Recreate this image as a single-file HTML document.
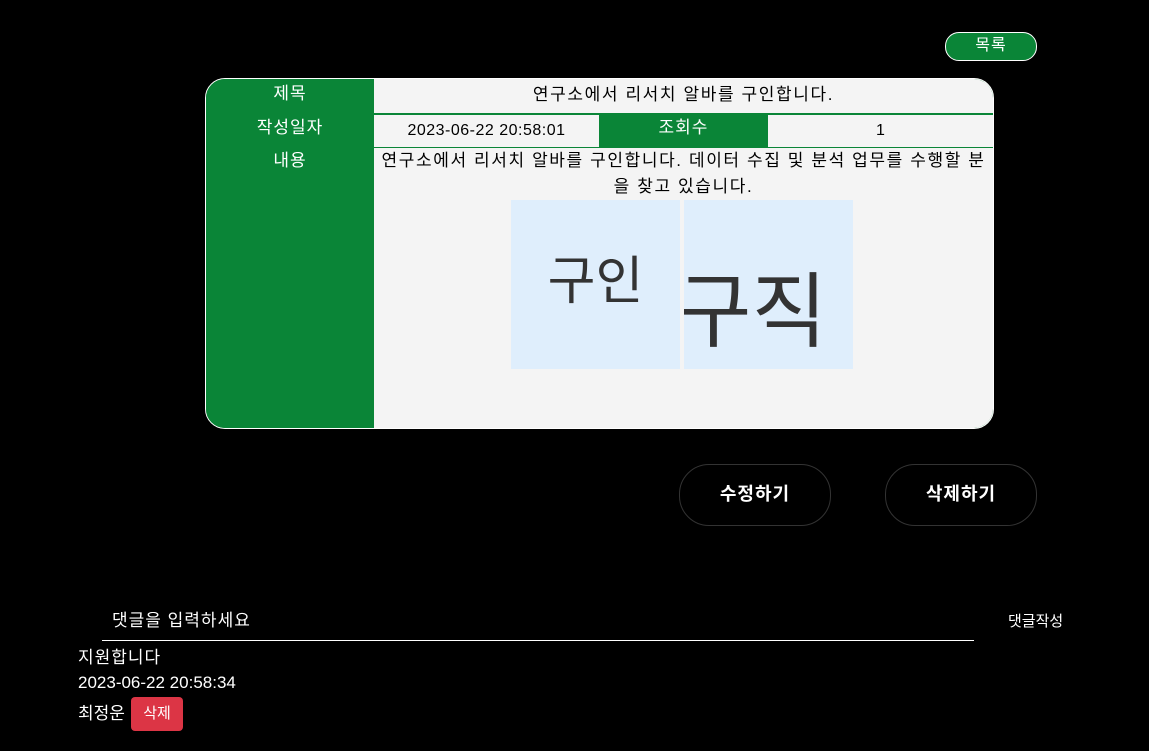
<!DOCTYPE html>
<html><head><meta charset="utf-8"><style>
body{margin:0;width:1149px;height:751px;background:#000;font-family:"Liberation Sans","Noto Sans CJK KR",sans-serif;color:#fff;position:relative;overflow:hidden}
.abs{position:absolute}
.g{background:#0a8537;color:#fff}
.l{background:#f4f4f4;color:#000}
.c{display:flex;justify-content:center;font-size:17px}
</style></head><body>
<div class="abs g" style="left:945px;top:32px;width:90px;height:27px;border:1px solid #fff;border-radius:14px;text-align:center;line-height:26px;font-size:16px;letter-spacing:1px">목록</div>
<div class="abs" style="left:205px;top:78px;width:787px;height:349px;border:1px solid #fff;border-radius:20px;overflow:hidden;background:#0a8537">
 <div class="abs g c" style="left:0;top:0;width:168px;height:34px;line-height:30px;letter-spacing:1px">제목</div>
 <div class="abs l c" style="left:168px;top:0;width:619px;height:34px;line-height:32px;letter-spacing:1.6px">연구소에서 리서치 알바를 구인합니다.</div>
 <div class="abs g c" style="left:0;top:36px;width:168px;height:32px;line-height:26px;letter-spacing:1px">작성일자</div>
 <div class="abs l c" style="left:168px;top:36px;width:225px;height:32px;line-height:32px;font-size:16px;letter-spacing:0.5px">2023-06-22 20:58:01</div>
 <div class="abs g c" style="left:393px;top:36px;width:169px;height:32px;line-height:26px;letter-spacing:1px">조회수</div>
 <div class="abs l c" style="left:562px;top:36px;width:225px;height:32px;line-height:32px;font-size:16px">1</div>
 <div class="abs g c" style="left:0;top:69px;width:168px;height:280px;line-height:26px;letter-spacing:1px">내용</div>
 <div class="abs l" style="left:168px;top:69px;width:619px;height:280px;text-align:center;font-size:17px;line-height:26px;letter-spacing:1.6px">연구소에서 리서치 알바를 구인합니다. 데이터 수집 및 분석 업무를 수행할 분<br>을 찾고 있습니다.</div>
</div>
<div class="abs" style="left:511px;top:200px;width:169px;height:169px;background:#dfeefc;color:#333;font-size:52px;line-height:165px;text-align:center">구인</div>
<div class="abs" style="left:684px;top:200px;width:169px;height:169px;background:#dfeefc;color:#333;font-size:82px;line-height:225px;overflow:hidden;white-space:nowrap;text-indent:-8px">구직</div>
<div class="abs" style="left:679px;top:464px;width:150px;height:60px;border:1px solid #333;border-radius:30px;text-align:center;line-height:58px;font-weight:bold;font-size:18px;letter-spacing:1px">수정하기</div>
<div class="abs" style="left:885px;top:464px;width:150px;height:60px;border:1px solid #333;border-radius:30px;text-align:center;line-height:58px;font-weight:bold;font-size:18px;letter-spacing:1px">삭제하기</div>
<div class="abs" style="left:112px;top:606px;font-size:17px;letter-spacing:1px">댓글을 입력하세요</div>
<div class="abs" style="left:102px;top:640px;width:872px;height:1px;background:#fff"></div>
<div class="abs" style="left:1008px;top:610px;font-size:15px">댓글작성</div>
<div class="abs" style="left:78px;top:643px;font-size:17px;letter-spacing:1px">지원합니다</div>
<div class="abs" style="left:78px;top:673px;font-size:17px">2023-06-22 20:58:34</div>
<div class="abs" style="left:78px;top:699px;font-size:17px">최정운</div>
<div class="abs" style="left:131px;top:697px;width:52px;height:34px;background:#dc3545;border-radius:4px;text-align:center;line-height:34px;font-size:15px">삭제</div>
</body></html>
